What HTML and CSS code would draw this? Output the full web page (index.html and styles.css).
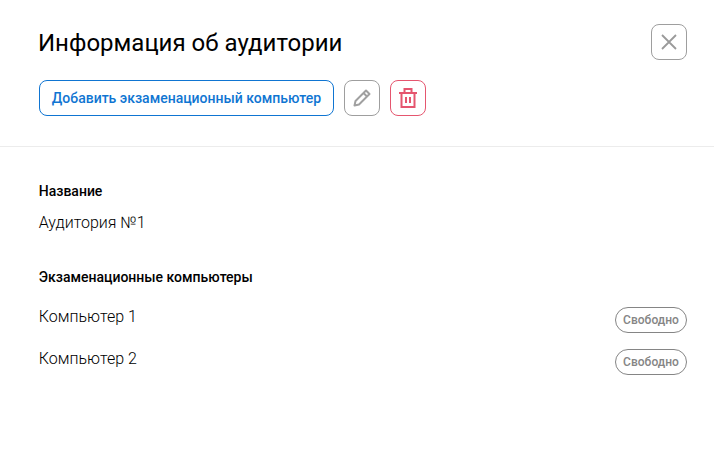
FILE: index.html
```html
<!DOCTYPE html>
<html lang="ru">
<head>
    <meta charset="UTF-8">
    <meta name="viewport" content="width=device-width, initial-scale=1.0">
    <title>Информация об аудитории</title>
    <link rel="stylesheet" href="styles.css">
</head>
<body>
    <div class="dialog">
        <header class="dialog-header">
            <div class="title-row">
                <h1>Информация об аудитории</h1>
                <button class="icon-btn close-btn" type="button" aria-label="Закрыть">
                    <svg width="16" height="16" viewBox="0 0 16 16" fill="none" stroke="#9a9a9a" stroke-width="1.8">
                        <path d="M1 1 L15 15 M15 1 L1 15"/>
                    </svg>
                </button>
            </div>
            <div class="actions">
                <button class="add-btn" type="button">Добавить экзаменационный компьютер</button>
                <button class="icon-btn" type="button" aria-label="Редактировать">
                    <svg width="18" height="18" viewBox="0 0 18 18" fill="none" stroke="#a0a0a0" stroke-width="2" stroke-linejoin="round">
                        <path d="M13 1.5 L16.5 5 L6 15.5 L1.5 16.5 L2.5 12 Z"/>
                        <path d="M10.5 4 L14 7.5"/>
                    </svg>
                </button>
                <button class="icon-btn danger" type="button" aria-label="Удалить">
                    <svg width="18" height="20" viewBox="0 0 18 20" fill="none" stroke="#e5566f" stroke-width="2">
                        <path d="M0 5 H18"/>
                        <path d="M5.5 5 V1 H12.5 V5"/>
                        <path d="M2.5 5 V19 H15.5 V5"/>
                        <path d="M7 9 V15 M11 9 V15"/>
                    </svg>
                </button>
            </div>
        </header>
        <section class="dialog-body">
            <h2>Название</h2>
            <p class="room-name">Аудитория №1</p>
            <h2 class="computers-title">Экзаменационные компьютеры</h2>
            <ul class="computers">
                <li><span>Компьютер 1</span><span class="badge">Свободно</span></li>
                <li><span>Компьютер 2</span><span class="badge">Свободно</span></li>
            </ul>
        </section>
    </div>
</body>
</html>
```

FILE: styles.css
```css
* {
    box-sizing: border-box;
}

body {
    margin: 0;
    font-family: Roboto, "Liberation Sans", sans-serif;
    background-color: #fff;
    color: #000;
}

.dialog-header {
    padding: 24px 27px 24px 39px;
    border-bottom: 1px solid #ececec;
    height: 147px;
}

.title-row {
    display: flex;
    justify-content: space-between;
    margin-left: -1px;
}

h1 {
    margin: 5px 0 0;
    font-size: 24px;
    line-height: 28px;
    font-weight: 400;
    color: #000;
}

.actions {
    display: flex;
    gap: 10px;
    margin-top: 20px;
}

.icon-btn {
    display: flex;
    align-items: center;
    justify-content: center;
    width: 36px;
    height: 36px;
    padding: 0;
    background: #fff;
    border: 1px solid #9e9e9e;
    border-radius: 8px;
}

.icon-btn.danger {
    border-color: #e5566f;
}

.add-btn {
    height: 36px;
    width: 295px;
    padding: 0;
    font-family: inherit;
    font-size: 14px;
    font-weight: 500;
    color: #0f75d2;
    background: #fff;
    border: 1px solid #0f75d2;
    border-radius: 8px;
}

.dialog-body {
    padding: 36px 27px 0 38.75px;
}

h2 {
    margin: 0;
    font-size: 14px;
    line-height: 16px;
    font-weight: 500;
    color: #000;
}

.room-name {
    margin: 14px 0 0;
    font-size: 16px;
    line-height: 20px;
    font-weight: 300;
}

.computers-title {
    margin-top: 36px;
}

.computers {
    list-style: none;
    margin: 22px 0 0;
    padding: 0;
    font-size: 16px;
    font-weight: 300;
}

.computers li {
    display: flex;
    justify-content: space-between;
    height: 42px;
    line-height: 20px;
}

.badge {
    display: block;
    width: 72px;
    height: 26px;
    font-size: 12px;
    line-height: 24px;
    font-weight: 500;
    letter-spacing: 0.02px;
    text-align: center;
    color: #858585;
    border: 1px solid #858585;
    border-radius: 13px;
}
```
